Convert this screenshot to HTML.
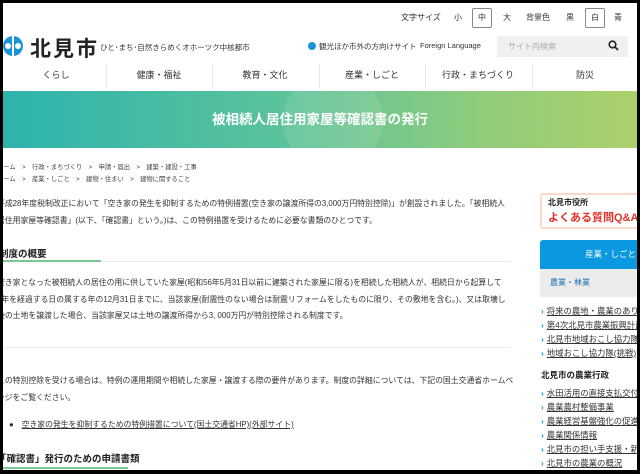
<!DOCTYPE html>
<html><head><meta charset="utf-8"><style>
*{margin:0;padding:0;box-sizing:border-box}
body{width:640px;height:474px;overflow:hidden;background:#000;font-family:"Liberation Sans","Noto Sans CJK JP",sans-serif;color:#333;position:relative}
#pg{position:absolute;left:3px;top:3px;width:634px;height:467px;background:#fff;overflow:hidden}
.a{position:absolute;white-space:nowrap}
.sb{border:1px solid #888;border-radius:2px}
.nav{position:absolute;top:60px;width:106px;height:25px;text-align:center;font-size:9px;line-height:25px;color:#333}
.sep{position:absolute;top:61px;width:1px;height:24px;background:#e6e6e6}
#main{position:absolute;left:0;top:0;width:512px;height:467px;overflow:hidden}
.p{font-size:7.85px;color:#333;line-height:16.5px;position:absolute;left:-6px;white-space:nowrap}
.sl{position:absolute;left:538px;font-size:8.4px;color:#333;text-decoration:underline;white-space:nowrap}
.sl:before{content:"› ";color:#0a8fd8;font-weight:bold;text-decoration:none;display:inline-block;margin-right:3px}
</style></head><body><div id="pg">
<div class="a" style="left:398px;top:9px;font-size:8px">文字サイズ</div>
<div class="a" style="left:451px;top:9px;font-size:8px">小</div>
<div class="a sb" style="left:469px;top:5px;width:20px;height:20px;font-size:8px;text-align:center;line-height:18px">中</div>
<div class="a" style="left:500px;top:9px;font-size:8px">大</div>
<div class="a" style="left:523px;top:9px;font-size:8px">背景色</div>
<div class="a" style="left:563px;top:9px;font-size:8px">黒</div>
<div class="a sb" style="left:582px;top:5px;width:20px;height:20px;font-size:8px;text-align:center;line-height:18px">白</div>
<div class="a" style="left:611px;top:9px;font-size:8px">青</div>

<svg class="a" style="left:-1px;top:32px" width="22" height="22" viewBox="0 0 22 22"><circle cx="11" cy="11" r="10" fill="#1a94d8"/><rect x="10" y="0" width="2" height="22" fill="#fff"/><circle cx="6" cy="11" r="3" fill="#fff"/><circle cx="16" cy="11" r="3" fill="#fff"/></svg>
<div class="a" style="left:27px;top:30px;font-size:21px;font-weight:bold;color:#222;letter-spacing:2px">北見市</div>
<div class="a" style="left:97px;top:39px;font-size:7.5px;color:#333">ひと･まち･自然きらめくオホーツク中核都市</div>
<div class="a" style="left:305px;top:39px;width:8px;height:8px;border-radius:50%;background:#1a94d8"></div>
<div class="a" style="left:316px;top:38px;font-size:7.5px">観光ほか市外の方向けサイト</div>
<div class="a" style="left:417px;top:38px;font-size:7.5px">Foreign Language</div>
<div class="a" style="left:494px;top:33px;width:131px;height:21px;background:#f0f0f0"></div>
<div class="a" style="left:505px;top:38px;font-size:8px;color:#aaa">サイト内検索</div>
<svg class="a" style="left:605px;top:37px" width="11" height="11" viewBox="0 0 11 11"><circle cx="4.5" cy="4.5" r="3.3" fill="none" stroke="#222" stroke-width="1.6"/><path d="M7 7l3 3" stroke="#222" stroke-width="1.8"/></svg>

<div class="nav" style="left:0">くらし</div>
<div class="nav" style="left:103px">健康・福祉</div>
<div class="nav" style="left:209px">教育・文化</div>
<div class="nav" style="left:316px">産業・しごと</div>
<div class="nav" style="left:422px">行政・まちづくり</div>
<div class="nav" style="left:529px">防災</div>
<div class="sep" style="left:103px"></div><div class="sep" style="left:209px"></div><div class="sep" style="left:316px"></div><div class="sep" style="left:422px"></div><div class="sep" style="left:529px"></div>

<div class="a" style="left:0;top:88px;width:634px;height:57px;background:linear-gradient(90deg,#2db3ad 0%,#5cc39a 45%,#8fcc7c 75%,#acd06a 100%);overflow:hidden">
<div class="a" style="left:280px;top:-20px;width:100px;height:100px;border-radius:50%;background:rgba(255,255,255,0.1)"></div>
<div class="a" style="left:0;top:0;width:634px;text-align:center;line-height:57px;color:#fff;font-size:13.5px;font-weight:bold">被相続人居住用家屋等確認書の発行</div>
</div>

<div id="main">
<div class="a" style="left:-6px;top:159px;font-size:6.3px;color:#444">ホーム　&gt;　行政・まちづくり　&gt;　申請・届出　&gt;　建築・建設・工事</div>
<div class="a" style="left:-6px;top:171px;font-size:6.3px;color:#444">ホーム　&gt;　産業・しごと　&gt;　建物・住まい　&gt;　建物に関すること</div>

<div class="p" style="top:193px">平成28年度税制改正において「空き家の発生を抑制するための特例措置(空き家の譲渡所得の3,000万円特別控除)」が創設されました。「被相続人<br>居住用家屋等確認書」(以下、「確認書」という。)は、この特例措置を受けるために必要な書類のひとつです。</div>

<div class="a" style="left:-4px;top:243px;font-size:9.5px;font-weight:bold;color:#222">制度の概要</div>
<div class="a" style="left:0;top:258px;width:507px;height:1px;background:#e8e8e8"></div>
<div class="a" style="left:0;top:257px;width:98px;height:2px;background:#7cc894"></div>

<div class="p" style="top:272px">空き家となった被相続人の居住の用に供していた家屋(昭和56年5月31日以前に建築された家屋に限る)を相続した相続人が、相続日から起算して<br>3年を経過する日の属する年の12月31日までに、当該家屋(耐震性のない場合は耐震リフォームをしたものに限り、その敷地を含む。)、又は取壊し<br>後の土地を譲渡した場合、当該家屋又は土地の譲渡所得から3, 000万円が特別控除される制度です。</div>

<div class="a" style="left:0;top:344px;width:507px;height:1px;background:#eee"></div>

<div class="p" style="top:370px">この特別控除を受ける場合は、特例の運用期間や相続した家屋・譲渡する際の要件があります。制度の詳細については、下記の国土交通省ホームペ<br>ージをご覧ください。</div>
<div class="a" style="left:6px;top:416px;font-size:7.85px;color:#333">●　<span style="text-decoration:underline">空き家の発生を抑制するための特例措置について(国土交通省HP)(外部サイト)</span></div>

<div class="a" style="left:-6px;top:448px;font-size:9.5px;font-weight:bold;color:#222">「確認書」発行のための申請書類</div>
<div class="a" style="left:0;top:464px;width:125px;height:2px;background:#7cc894"></div>
</div>

<div class="a" style="left:537px;top:190px;width:110px;height:36px;border:2px solid #fbd9c8;border-radius:3px;background:#fff"></div>
<div class="a" style="left:545px;top:194px;font-size:8px;font-weight:bold;color:#222">北見市役所</div>
<div class="a" style="left:545px;top:206px;font-size:11px;font-weight:bold;color:#e0342a">よくある質問Q&amp;A</div>
<div class="a" style="left:537px;top:237px;width:100px;height:29px;background:#0a98e0;border-radius:3px 0 0 0;color:#fff;font-size:8.5px;line-height:29px;padding-left:45px">産業・しごと</div>
<div class="a" style="left:537px;top:266px;width:100px;height:28px;background:#ececec;color:#1a6fb0;font-size:8px;line-height:28px;padding-left:10px">農業・林業</div>
<div class="sl" style="top:302px">将来の農地・農業のあり方</div>
<div class="sl" style="top:316px">第4次北見市農業振興計画</div>
<div class="sl" style="top:330px">北見市地域おこし協力隊</div>
<div class="sl" style="top:344px">地域おこし協力隊(挑戦)</div>
<div class="a" style="left:538px;top:366px;font-size:8.5px;font-weight:bold;color:#222">北見市の農業行政</div>
<div class="sl" style="top:384px">水田活用の直接支払交付金</div>
<div class="sl" style="top:398px">農業農村整備事業</div>
<div class="sl" style="top:412px">農業経営基盤強化の促進</div>
<div class="sl" style="top:426px">農業関係情報</div>
<div class="sl" style="top:440px">北見市の担い手支援・新規</div>
<div class="sl" style="top:454px">北見市の農業の概況</div>
</div></body></html>
